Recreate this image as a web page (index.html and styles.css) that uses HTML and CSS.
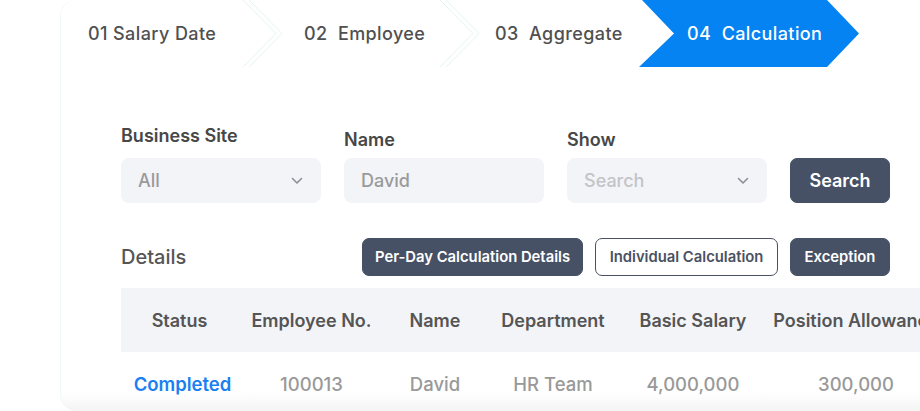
FILE: index.html
```html
<!DOCTYPE html>
<html>
  <head>
    <meta name="viewport" content="width=device-width,initial-scale=1.0">
    <title>Payroll calculation</title>
    <link rel="stylesheet" href="styles.css">
  </head>
  <body>
    <div class="page">
      <!-- Steps -->
      <div class="steps">
        <div class="step step-first">01 Salary Date</div>
        <svg class="step-sep" width="40" height="67" viewBox="0 0 40 67">
          <polyline points="0,0 33,33.5 0,67" fill="none" stroke="#e3f5ee" stroke-width="1"/>
          <polyline points="6,0 39,33.5 6,67" fill="none" stroke="#e3f5ee" stroke-width="1"/>
        </svg>
        <div class="step step-second">02&nbsp; Employee</div>
        <svg class="step-sep" width="40" height="67" viewBox="0 0 40 67">
          <polyline points="0,0 33,33.5 0,67" fill="none" stroke="#e3f5ee" stroke-width="1"/>
          <polyline points="6,0 39,33.5 6,67" fill="none" stroke="#e3f5ee" stroke-width="1"/>
        </svg>
        <div class="step step-third">03&nbsp; Aggregate</div>
        <div class="step step-active">04&nbsp; Calculation</div>
      </div>

      <div class="content">
        <!-- Filters -->
        <div class="filters">
          <div class="field">
            <label class="field-label">Business Site</label>
            <div class="select">
              <span>All</span>
              <svg width="12" height="8" viewBox="0 0 12 8"><polyline points="1.5,1.5 6,6 10.5,1.5" fill="none" stroke="#8a8f99" stroke-width="1.6" stroke-linecap="round" stroke-linejoin="round"/></svg>
            </div>
          </div>
          <div class="field">
            <label class="field-label label-low">Name</label>
            <div class="select"><span>David</span></div>
          </div>
          <div class="field">
            <label class="field-label label-low">Show</label>
            <div class="select">
              <span class="placeholder">Search</span>
              <svg width="12" height="8" viewBox="0 0 12 8"><polyline points="1.5,1.5 6,6 10.5,1.5" fill="none" stroke="#8a8f99" stroke-width="1.6" stroke-linecap="round" stroke-linejoin="round"/></svg>
            </div>
          </div>
          <button class="btn btn-dark btn-search">Search</button>
        </div>

        <!-- Details -->
        <div class="details-bar">
          <h3 class="details-title">Details</h3>
          <div class="details-actions">
            <button class="btn btn-dark">Per-Day Calculation Details</button>
            <button class="btn btn-outline">Individual Calculation</button>
            <button class="btn btn-dark btn-exception">Exception</button>
          </div>
        </div>

        <table class="results">
          <colgroup>
            <col style="width:123px">
            <col style="width:135px">
            <col style="width:112px">
            <col style="width:124px">
            <col style="width:156px">
            <col style="width:170px">
          </colgroup>
          <thead>
            <tr>
              <th class="col-status">Status</th>
              <th>Employee No.</th>
              <th>Name</th>
              <th>Department</th>
              <th>Basic Salary</th>
              <th>Position Allowance</th>
            </tr>
          </thead>
          <tbody>
            <tr>
              <td class="status-done">Completed</td>
              <td>100013</td>
              <td>David</td>
              <td>HR Team</td>
              <td>4,000,000</td>
              <td>300,000</td>
            </tr>
          </tbody>
        </table>
      </div>
    </div>
  </body>
</html>
```

FILE: styles.css
```css
html, body { margin: 0; padding: 0; }
body {
  width: 920px;
  height: 411px;
  overflow: hidden;
  background: #fff;
  font-family: Inter, "Noto Sans", sans-serif;
  color: #4a4a4a;
}

.page {
  margin-left: 60px;
  height: 411px;
  background: linear-gradient(to bottom, rgba(255,255,255,0) 392px, #f4f4f5 411px);
  border-left: 1px solid #f1faf6;
  border-radius: 16px 0 0 16px;
}

/* Steps */
.steps {
  display: flex;
  align-items: stretch;
  height: 67px;
}
.step {
  display: flex;
  align-items: center;
  font-size: 18px;
  font-weight: 500;
  color: #505050;
  letter-spacing: 0.4px;
  white-space: nowrap;
}
.step-first { width: 155px; padding-left: 27px; }
.step-second { width: 136px; padding-left: 21px; }
.step-third { width: 144px; padding-left: 15px; }
.step-sep { flex: none; display: block; }
.step-active {
  width: 172px;
  padding-left: 48px;
  background: #0583f2;
  color: #fff;
  clip-path: polygon(3px 0, 188px 0, 220px 50%, 188px 100%, 0 100%, 35px 50%);
}

.content { padding: 59px 0 0 60px; }

/* Filters */
.filters {
  display: flex;
  align-items: flex-end;
  gap: 23px;
}
.field { display: flex; flex-direction: column; width: 200px; }
.field-label {
  font-size: 18px;
  font-weight: 600;
  color: #474747;
  line-height: 20px;
  margin-bottom: 12px;
}
.label-low { margin-bottom: 10px; position: relative; top: 2px; }
.select {
  height: 45px;
  box-sizing: border-box;
  background: #f3f4f8;
  border-radius: 8px;
  padding: 0 18px 0 17px;
  display: flex;
  align-items: center;
  justify-content: space-between;
  font-size: 18px;
  font-weight: 500;
  color: #9a9a9a;
}
.select .placeholder { color: #c2c4c8; }

.btn {
  font-family: Inter, "Noto Sans", sans-serif;
  font-weight: 600;
  border-radius: 7px;
  border: 1px solid transparent;
  cursor: pointer;
  box-sizing: border-box;
  white-space: nowrap;
}
.btn-dark { background: #475166; color: #fff; border-color: #475166; }
.btn-outline { background: #fff; color: #4a5163; border-color: #4a5163; }
.btn-search { width: 100px; height: 45px; font-size: 18px; }

/* Details */
.details-bar {
  display: flex;
  align-items: center;
  justify-content: space-between;
  width: 769px;
  margin-top: 35px;
}
.details-title {
  margin: 0;
  font-size: 20px;
  font-weight: 500;
  color: #555;
}
.details-actions { display: flex; gap: 12px; }
.details-actions .btn { height: 38px; font-size: 14.8px; padding: 0 10px; }
.details-actions .btn-dark:first-child { width: 221px; }
.details-actions .btn-outline { width: 183px; }
.btn-exception { width: 100px; }

/* Table */
.results {
  margin-top: 12px;
  border-collapse: collapse;
  table-layout: fixed;
  width: 820px;
}
.results th {
  background: #f3f4f8;
  height: 64px;
  font-size: 18px;
  font-weight: 600;
  color: #555;
  text-align: center;
  white-space: nowrap;
  overflow: hidden;
  padding: 0;
}
.results th.col-status { padding-right: 6px; }
.results td {
  height: 64px;
  font-size: 18.5px;
  font-weight: 500;
  color: #999;
  text-align: center;
  padding: 0;
  white-space: nowrap;
}
.results td.status-done { color: #1a80f2; font-weight: 600; }
```
